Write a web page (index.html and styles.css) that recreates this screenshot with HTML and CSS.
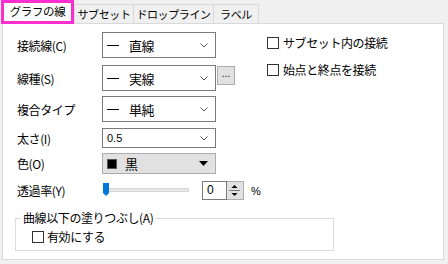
FILE: index.html
```html
<!DOCTYPE html>
<html>
  <head>
    <title>グラフの線</title>
    <link rel="stylesheet" href="styles.css">
  </head>
  <body>
    <div class="tabs">
      <div class="tab active">グラフの線</div>
      <div class="tab tab-subset">サブセット</div>
      <div class="tab tab-drop">ドロップライン</div>
      <div class="tab tab-label">ラベル</div>
    </div>

    <div class="panel">
      <div class="top">
        <div class="fields">
          <div class="row r1">
            <span class="label">接続線(C)</span>
            <div class="combo">
              <span class="dash"></span><span class="value">直線</span>
              <svg class="chev" width="8" height="5" viewBox="0 0 8 5"><polyline points="0.5,0.5 4,4 7.5,0.5" fill="none" stroke="#555" stroke-width="1"/></svg>
            </div>
          </div>
          <div class="row r2">
            <span class="label">線種(S)</span>
            <div class="combo">
              <span class="dash"></span><span class="value">実線</span>
              <svg class="chev" width="8" height="5" viewBox="0 0 8 5"><polyline points="0.5,0.5 4,4 7.5,0.5" fill="none" stroke="#555" stroke-width="1"/></svg>
            </div>
            <button class="more">...</button>
          </div>
          <div class="row r3">
            <span class="label">複合タイプ</span>
            <div class="combo">
              <span class="dash"></span><span class="value">単純</span>
              <svg class="chev" width="8" height="5" viewBox="0 0 8 5"><polyline points="0.5,0.5 4,4 7.5,0.5" fill="none" stroke="#555" stroke-width="1"/></svg>
            </div>
          </div>
          <div class="row r4">
            <span class="label">太さ(I)</span>
            <div class="combo small">
              <span class="num">0.5</span>
              <svg class="chev" width="8" height="5" viewBox="0 0 8 5"><polyline points="0.5,0.5 4,4 7.5,0.5" fill="none" stroke="#555" stroke-width="1"/></svg>
            </div>
          </div>
          <div class="row r5">
            <span class="label">色(O)</span>
            <div class="combo color">
              <span class="swatch"></span><span class="value">黒</span>
              <svg class="tri" width="9" height="5" viewBox="0 0 9 5"><polygon points="0,0 9,0 4.5,5" fill="#000"/></svg>
            </div>
          </div>
          <div class="row r6">
            <span class="label">透過率(Y)</span>
            <svg class="slider" width="86" height="14" viewBox="0 0 86 14">
              <rect x="0.5" y="5.5" width="85" height="3" fill="#e7e7e7" stroke="#d6d6d6"/>
              <path d="M0 0 H6 V10 L3 13 L0 10 Z" fill="#0078d7"/>
            </svg>
            <div class="spin">
              <span class="spin-input">0</span>
              <span class="spin-buttons">
                <svg width="15" height="17" viewBox="0 0 15 17">
                  <polygon points="7.5,3 10.5,6 4.5,6" fill="#000"/>
                  <line x1="2" y1="8.5" x2="13" y2="8.5" stroke="#7a7a7a"/>
                  <polygon points="4.5,11 10.5,11 7.5,14" fill="#000"/>
                </svg>
              </span>
            </div>
            <span class="percent">%</span>
          </div>
        </div>

        <div class="options">
          <div class="opt"><span class="box"></span>サブセット内の接続</div>
          <div class="opt"><span class="box"></span>始点と終点を接続</div>
        </div>
      </div>

      <fieldset class="fill">
        <legend>曲線以下の塗りつぶし(A)</legend>
        <div class="opt"><span class="box"></span>有効にする</div>
      </fieldset>
    </div>
  </body>
</html>
```

FILE: styles.css
```css
/* dialog: line settings */
body {
  margin: 0;
  background-color: #f0f0f0;
  font-family: "Noto Sans CJK JP", sans-serif;
  font-size: 12px;
  letter-spacing: -0.4px;
  color: #000;
}

.tabs {
  display: flex;
  align-items: flex-end;
  height: 23px;
  padding-left: 1px;
}

.tab {
  box-sizing: border-box;
  height: 19px;
  display: flex;
  align-items: center;
  justify-content: center;
  border: 1px solid #d9d9d9;
  border-bottom: none;
  background-color: #f0f0f0;
  font-size: 11px;
  line-height: 1;
}

.tab.active {
  width: 73px;
  height: 24px;
  margin-bottom: -1px;
  border: 3px solid #fb2ed0;
  background-color: #fff;
  position: relative;
  z-index: 1;
  font-size: 11.5px;
}

.tab-subset {
  width: 60px;
}

.tab-drop {
  width: 81px;
  margin-left: -1px;
}

.tab-label {
  width: 46px;
  margin-left: -1px;
}

.panel {
  box-sizing: border-box;
  height: 237px;
  margin: 0 4px 0 2px;
  padding: 8px 0 0 14px;
  border: 1px solid #d9d9d9;
  background-color: #fff;
}

.top {
  display: flex;
}

.fields {
  width: 250px;
}

.row {
  display: flex;
  align-items: center;
}

.r1, .r2, .r3 {
  height: 26px;
}

.r1 { margin-bottom: 7px; }
.r2 { margin-bottom: 5px; }
.r3 { margin-bottom: 6px; }
.r4 { height: 20px; margin-bottom: 5px; }
.r5 { height: 21px; margin-bottom: 7px; }
.r6 { height: 19px; }

.label {
  width: 85px;
  flex-shrink: 0;
}

.combo {
  box-sizing: border-box;
  width: 114px;
  height: 100%;
  display: flex;
  align-items: center;
  padding: 0 7px 0 4px;
  border: 1px solid #7a7a7a;
  background-color: #fff;
  font-size: 13px;
}

.dash {
  width: 12px;
  height: 1px;
  margin-right: 10px;
  background-color: #000;
}

.chev,
.tri {
  margin-left: auto;
}

.num {
  font-family: "Liberation Sans", sans-serif;
  font-size: 11px;
  letter-spacing: 0;
}

.combo.color {
  border-color: #adadad;
  background-color: #e1e1e1;
}

.swatch {
  box-sizing: border-box;
  width: 10px;
  height: 10px;
  margin-right: 8px;
  border: 1px solid #555;
  background-color: #000;
}

.more {
  box-sizing: border-box;
  align-self: flex-start;
  width: 18px;
  height: 19px;
  margin: 1px 0 0 1px;
  padding: 0 0 3px;
  border: 1px solid #adadad;
  background-color: #e1e1e1;
  font-family: "Liberation Sans", sans-serif;
  font-size: 10px;
  letter-spacing: 0;
  line-height: 1;
}

.slider {
  align-self: flex-start;
  margin: 2px 0 0 1px;
}

.spin {
  display: flex;
  height: 19px;
  margin-left: 13px;
}

.spin-input {
  box-sizing: border-box;
  width: 25px;
  padding-left: 4px;
  border: 1px solid #7a7a7a;
  background-color: #fff;
  font-family: "Liberation Sans", sans-serif;
  font-size: 12px;
  letter-spacing: 0;
  line-height: 17px;
}

.spin-buttons {
  box-sizing: border-box;
  width: 17px;
  border: 1px solid #adadad;
  border-left: none;
  background-color: #e1e1e1;
  display: flex;
}

.percent {
  margin-left: 7px;
  font-family: "Liberation Sans", sans-serif;
  font-size: 11px;
  letter-spacing: 0;
}

.options {
  padding-top: 5px;
}

.opt {
  display: flex;
  align-items: center;
  height: 12px;
  line-height: 12px;
}

.options .opt {
  margin-bottom: 15px;
}

.box {
  box-sizing: border-box;
  width: 12px;
  height: 12px;
  margin-right: 4px;
  border: 1px solid #333;
  background-color: #fff;
}

.fill {
  box-sizing: border-box;
  width: 319px;
  margin: 11px 0 0 -2px;
  padding: 0 0 6px 5px;
  border: 1px solid #dcdcdc;
}

.fill legend {
  padding: 0 2px;
  line-height: 14px;
}

.fill .opt {
  margin: 5px 0 0 11px;
  height: 14px;
}

.fill .box {
  margin-right: 3px;
}
```
